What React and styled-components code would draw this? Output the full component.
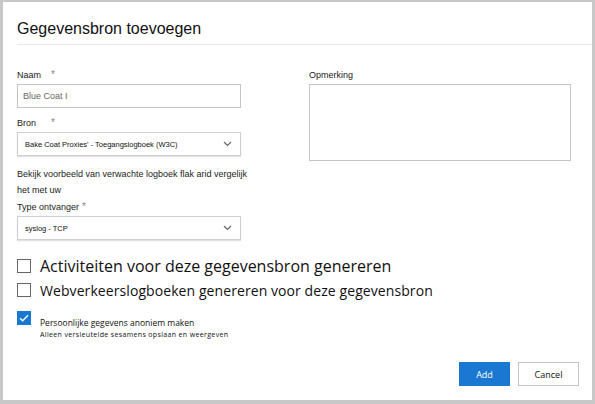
import React from 'react';
import styled, { createGlobalStyle } from 'styled-components';

const GlobalStyle = createGlobalStyle`
  html, body {
    margin: 0;
    padding: 0;
    background: #c8c8c8;
  }
  * {
    box-sizing: border-box;
  }
`;

const Frame = styled.div`
  width: 595px;
  height: 404px;
  padding: 2px 3px 4px 3px;
`;

const Dialog = styled.div`
  width: 100%;
  height: 100%;
  background: #fff;
  padding: 17px 0 0 14px;
  display: flex;
  flex-direction: column;
  font-family: "Liberation Sans", Arial, sans-serif;
  color: #222;
`;

const Title = styled.h1`
  margin: 0;
  font-size: 16px;
  line-height: 20px;
  font-weight: 400;
  color: #111;
  padding-bottom: 5px;
  border-bottom: 1px solid #e8e8e8;
`;

const Columns = styled.div`
  display: grid;
  grid-template-columns: 224px 262px;
  column-gap: 68px;
  margin-top: 24px;
`;

const Column = styled.div`
  display: flex;
  flex-direction: column;
`;

const Label = styled.label`
  font-size: 9px;
  color: #222;
  height: 15px;
  line-height: 12px;
  display: flex;
  gap: ${p => p.$gap || 6}px;
`;

const Star = styled.span`
  color: #888;
  font-size: 10px;
`;

const Input = styled.div`
  height: 24px;
  border: 1px solid #c4c4c4;
  display: flex;
  align-items: center;
  padding-left: 5px;
  font-size: 9px;
  color: #666;
  margin-bottom: 9px;
`;

const Select = styled.div`
  height: 24px;
  border: 1px solid #cfcfcf;
  box-shadow: 0 1px 1px rgba(0, 0, 0, 0.12);
  display: flex;
  align-items: center;
  justify-content: space-between;
  padding: 0 8px 0 7px;
  font-size: 7.5px;
  color: #111;
  margin-bottom: ${p => p.$mb || 0}px;
`;

const Help = styled.p`
  margin: 0 0 3px;
  font-size: 9px;
  line-height: 16px;
  color: #222;
  white-space: nowrap;
`;

const TextArea = styled.div`
  height: 77px;
  border: 1px solid #c4c4c4;
`;

const Checks = styled.div`
  display: flex;
  flex-direction: column;
  margin-top: 14px;
`;

const CheckRow = styled.div`
  display: flex;
  align-items: ${p => (p.$top ? 'flex-start' : 'center')};
  gap: 9px;
  height: ${p => p.$h || 'auto'};
  margin-top: ${p => p.$mt || 0}px;
`;

const Box = styled.span`
  width: 14px;
  height: 14px;
  flex-shrink: 0;
  border: 1px solid ${p => (p.$checked ? '#1a78d2' : '#666')};
  background: ${p => (p.$checked ? '#1a78d2' : '#fff')};
  display: flex;
  align-items: center;
  justify-content: center;
`;

const CheckText = styled.span`
  font-family: "Open Sans", "Liberation Sans", sans-serif;
  font-size: ${p => p.$size}px;
  letter-spacing: ${p => p.$ls || 0}px;
  color: #111;
  white-space: nowrap;
`;

const SmallBlock = styled.div`
  display: flex;
  flex-direction: column;
  padding-top: 5px;
`;

const SmallText = styled.span`
  font-family: "Open Sans", "Liberation Sans", sans-serif;
  font-size: ${p => p.$size}px;
  line-height: ${p => p.$lh}px;
  letter-spacing: ${p => p.$ls || 0}px;
  color: #111;
`;

const Footer = styled.div`
  margin-top: auto;
  display: flex;
  justify-content: flex-end;
  gap: 8px;
  padding: 0 13px 14px 0;
`;

const Button = styled.button`
  height: 24px;
  width: ${p => p.$w}px;
  font-family: "Open Sans", "Liberation Sans", sans-serif;
  font-size: 9px;
  border: 1px solid ${p => (p.$primary ? '#1a78d2' : '#c4c4c4')};
  background: ${p => (p.$primary ? '#1a78d2' : '#fff')};
  color: ${p => (p.$primary ? '#fff' : '#111')};
  padding: 0;
`;

const Chevron = () => (
  <svg width="9" height="6" viewBox="0 0 9 6">
    <path d="M1 1l3.5 3.5L8 1" fill="none" stroke="#666" strokeWidth="1.2" />
  </svg>
);

const Tick = () => (
  <svg width="10" height="8" viewBox="0 0 10 8">
    <path d="M1 4.2l2.6 2.6L9 1.2" fill="none" stroke="#fff" strokeWidth="1.3" />
  </svg>
);

export default function App() {
  return (
    <Frame>
      <GlobalStyle />
      <Dialog>
        <Title>Gegevensbron toevoegen</Title>
        <Columns>
          <Column>
            <Label $gap={10}>Naam <Star>*</Star></Label>
            <Input>Blue Coat I</Input>
            <Label $gap={15}>Bron <Star>*</Star></Label>
            <Select $mb={10}>
              Bake Coat Proxies' - Toegangslogboek (W3C)
              <Chevron />
            </Select>
            <Help>
              Bekijk voorbeeld van verwachte logboek flak arid vergelijk
              <br />
              het met uw
            </Help>
            <Label $gap={3}>Type ontvanger <Star>*</Star></Label>
            <Select>
              syslog - TCP
              <Chevron />
            </Select>
          </Column>
          <Column>
            <Label>Opmerking</Label>
            <TextArea />
          </Column>
        </Columns>
        <Checks>
          <CheckRow $h="24px">
            <Box />
            <CheckText $size={16}>Activiteiten voor deze gegevensbron genereren</CheckText>
          </CheckRow>
          <CheckRow $h="24px">
            <Box />
            <CheckText $size={14} $ls={0.08}>Webverkeerslogboeken genereren voor deze gegevensbron</CheckText>
          </CheckRow>
          <CheckRow $top $mt={9}>
            <Box $checked>
              <Tick />
            </Box>
            <SmallBlock>
              <SmallText $size={8.5} $lh={13}>Persoonlijke gegevens anoniem maken</SmallText>
              <SmallText $size={7} $lh={11} $ls={0.35}>Alleen versleutelde sesamens opslaan en weergeven</SmallText>
            </SmallBlock>
          </CheckRow>
        </Checks>
        <Footer>
          <Button $primary $w={51}>Add</Button>
          <Button $w={61}>Cancel</Button>
        </Footer>
      </Dialog>
    </Frame>
  );
}
